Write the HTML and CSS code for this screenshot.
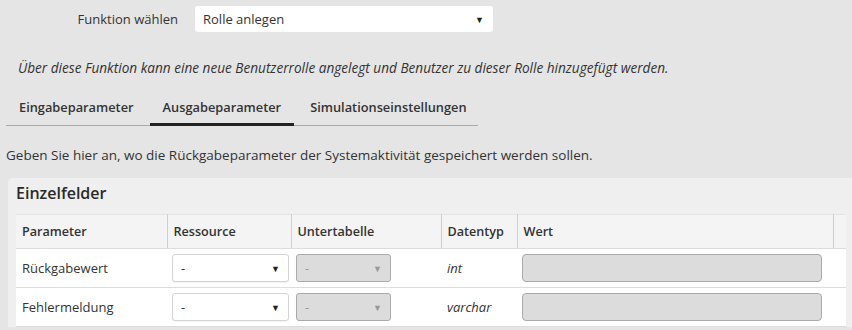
FILE: index.html
```html
<!DOCTYPE html>
<html lang="de">
<head>
    <meta charset="UTF-8">
    <meta name="viewport" content="width=device-width, initial-scale=1.0">
    <title>Systemaktivität</title>
    <link rel="stylesheet" href="styles.css">
</head>
<body>
    <!-- Auswahl der Funktion -->
    <div class="func-row">
        <label class="func-label">Funktion wählen</label>
        <div class="select func-select">
            <span>Rolle anlegen</span>
            <span class="arrow">&#9660;</span>
        </div>
    </div>

    <p class="desc">Über diese Funktion kann eine neue Benutzerrolle angelegt und Benutzer zu dieser Rolle hinzugefügt werden.</p>

    <div class="tabs">
        <div class="tab">Eingabeparameter</div>
        <div class="tab active">Ausgabeparameter</div>
        <div class="tab">Simulationseinstellungen</div>
    </div>

    <p class="hint">Geben Sie hier an, wo die Rückgabeparameter der Systemaktivität gespeichert werden sollen.</p>

    <div class="panel">
        <h2>Einzelfelder</h2>
        <table class="fields">
            <colgroup>
                <col style="width:151px">
                <col style="width:124px">
                <col style="width:150px">
                <col style="width:76px">
                <col style="width:316px">
                <col>
            </colgroup>
            <thead>
                <tr>
                    <th>Parameter</th>
                    <th>Ressource</th>
                    <th>Untertabelle</th>
                    <th>Datentyp</th>
                    <th>Wert</th>
                    <th></th>
                </tr>
            </thead>
            <tbody>
                <tr>
                    <td>Rückgabewert</td>
                    <td class="ctl"><div class="select res-select"><span>-</span><span class="arrow">&#9660;</span></div></td>
                    <td class="ctl"><div class="select sub-select disabled"><span>-</span><span class="arrow">&#9660;</span></div></td>
                    <td class="type">int</td>
                    <td class="ctl"><div class="value-input"></div></td>
                    <td></td>
                </tr>
                <tr>
                    <td>Fehlermeldung</td>
                    <td class="ctl"><div class="select res-select"><span>-</span><span class="arrow">&#9660;</span></div></td>
                    <td class="ctl"><div class="select sub-select disabled"><span>-</span><span class="arrow">&#9660;</span></div></td>
                    <td class="type">varchar</td>
                    <td class="ctl"><div class="value-input"></div></td>
                    <td></td>
                </tr>
            </tbody>
        </table>
    </div>
</body>
</html>
```

FILE: styles.css
```css
body {
    font-family: "Open Sans", Arial, sans-serif;
    font-size: 13px;
    margin: 0;
    padding: 0;
    background-color: #e5e5e5;
    color: #333;
    overflow: hidden;
}
.func-row {
    display: flex;
    align-items: center;
    padding-top: 6px;
}
.func-label {
    width: 178px;
    text-align: right;
    margin-right: 17px;
}
.select {
    display: flex;
    align-items: center;
    justify-content: space-between;
    box-sizing: border-box;
    background-color: #fff;
    border-radius: 3px;
    padding: 0 8px;
}
.select .arrow {
    font-size: 9px;
    color: #222;
}
.func-select {
    width: 298px;
    height: 26px;
    padding-left: 8px;
    padding-right: 9px;
}
.desc {
    margin: 0;
    padding: 27px 0 0 18px;
    font-style: italic;
    font-size: 13.6px;
    line-height: 18px;
}
.tabs {
    display: flex;
    width: 472px;
    margin: 13px 0 0 6px;
    border-bottom: 1px solid #aaa;
}
.tab {
    font-weight: 600;
    font-size: 12.8px;
    padding: 8px 13px 9px;
    line-height: 18px;
}
.tab.active {
    border-bottom: 3px solid #222;
    margin-bottom: -1px;
    padding-bottom: 7px;
    margin-left: 3px;
    margin-right: 3px;
}
.hint {
    margin: 0;
    padding: 20px 0 0 6px;
    font-size: 13.5px;
    line-height: 18px;
}
.panel {
    margin: 14px 0 0 8px;
    padding: 3px 6px 0 8px;
    background-color: #efefef;
    border-top-left-radius: 4px;
}
.panel h2 {
    margin: 0;
    font-size: 16px;
    font-weight: 600;
    color: #2a2a2a;
    line-height: 24px;
    height: 33px;
}
.fields {
    width: 830px;
    border-collapse: collapse;
    table-layout: fixed;
}
.fields th {
    text-align: left;
    font-weight: 600;
    font-size: 12.6px;
    background-color: #f4f4f4;
    height: 34px;
    padding: 0 6px;
    border-top: 1px solid #e4e4e4;
    border-right: 1px solid #cfcfcf;
    border-bottom: 1px solid #ddd;
    box-sizing: border-box;
}
.fields th:last-child {
    border-right: none;
}
.fields td {
    background-color: #fff;
    height: 39px;
    padding: 0 6px;
    border-bottom: 1px solid #ddd;
    box-sizing: border-box;
}
.fields td.ctl {
    padding: 0 4px 0 5px;
}
.fields td.type {
    font-style: italic;
}
.res-select {
    width: 117px;
    height: 28px;
    border: 1px solid #d4d4d4;
    box-shadow: 0 1px 1px rgba(0, 0, 0, 0.05);
}
.sub-select {
    width: 95px;
    height: 28px;
}
.select.disabled {
    background-color: #dcdcdc;
    border: 1px solid #aaa;
    color: #999;
}
.select.disabled .arrow {
    color: #999;
}
.value-input {
    width: 300px;
    height: 28px;
    box-sizing: border-box;
    background-color: #dcdcdc;
    border: 1px solid #aaa;
    border-radius: 4px;
}
```
